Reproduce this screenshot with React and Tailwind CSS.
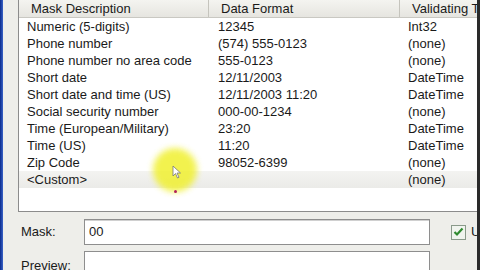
import React from 'react';

const rows = [
  ['Numeric (5-digits)', '12345', 'Int32'],
  ['Phone number', '(574) 555-0123', '(none)'],
  ['Phone number no area code', '555-0123', '(none)'],
  ['Short date', '12/11/2003', 'DateTime'],
  ['Short date and time (US)', '12/11/2003 11:20', 'DateTime'],
  ['Social security number', '000-00-1234', '(none)'],
  ['Time (European/Military)', '23:20', 'DateTime'],
  ['Time (US)', '11:20', 'DateTime'],
  ['Zip Code', '98052-6399', '(none)'],
  ['<Custom>', '', '(none)'],
];

const font = { fontFamily: '"Liberation Sans", Arial, sans-serif' };

export default function App() {
  return (
    <div className="w-[480px] h-[270px] overflow-hidden flex bg-[#eeeeea] text-[13px] text-[#1a1a1a] relative" style={font}>
      {/* window border left */}
      <div className="w-[3px] h-full shrink-0 bg-gradient-to-r from-[#0b2a8c] to-[#3a63c8]" />

      <div className="flex-1 flex flex-col pl-[15px] min-w-0">
        {/* list view */}
        <div className="w-[470px] h-[212px] shrink-0 border-l border-b border-[#8c8c8c] bg-white flex flex-col relative">
          <div className="h-[18px] shrink-0 flex items-center bg-gradient-to-b from-[#f4f4f0] to-[#e6e5e0] border-b border-[#c9c8c2] leading-none">
            <div className="w-[190px] shrink-0 pl-[12px] h-full flex items-center border-r border-[#c5c4bd]">Mask Description</div>
            <div className="w-[191px] shrink-0 pl-[12px] h-full flex items-center border-r border-[#c5c4bd]">Data Format</div>
            <div className="shrink-0 pl-[12px] whitespace-nowrap">Validating Type</div>
          </div>
          {rows.map((r, i) => (
            <div
              key={i}
              className={`h-[17px] shrink-0 flex items-center leading-none whitespace-nowrap ${i === 9 ? 'bg-gradient-to-b from-[#f3f3f1] to-[#ebebe8]' : ''}`}
            >
              <div className="w-[190px] shrink-0 pl-[8px]">{r[0]}</div>
              <div className="w-[191px] shrink-0 pl-[9px]">{r[1]}</div>
              <div className="shrink-0 pl-[8px]">{r[2]}</div>
            </div>
          ))}

          {/* cursor highlight */}
          <div className="absolute left-[134px] top-[148px] w-[44px] h-[44px] rounded-full bg-[#f0f030] opacity-85 blur-[3px]" />
          <svg className="absolute left-[153px] top-[165px]" width="10" height="14" viewBox="0 0 10 14">
            <path d="M1 1 L1 11 L3.5 8.5 L5.5 13 L7 12.3 L5 8 L8.5 8 Z" fill="#fff" stroke="#777" strokeWidth="0.8" />
          </svg>
          <div className="absolute left-[155px] top-[190px] w-[3px] h-[3px] rounded-full bg-[#b0205a]" />
        </div>

        {/* mask row */}
        <div className="flex items-center mt-[7px] h-[26px]">
          <div className="w-[66px] shrink-0 pl-[3px]">Mask:</div>
          <div className="w-[346px] shrink-0 h-[26px] border border-[#8e8e8e] bg-white flex items-center pl-[4px] shadow-[inset_0_1px_0_#d0d0d0]">00</div>
          <div className="ml-[21px] shrink-0 w-[15px] h-[15px] border border-[#8a9a8a] bg-[#f0f4ee] flex items-center justify-center">
            <svg width="11" height="10" viewBox="0 0 11 10">
              <path d="M1.5 5 L4 7.5 L9.5 1.5" fill="none" stroke="#2f8a2f" strokeWidth="2.2" />
            </svg>
          </div>
          <div className="ml-[5px] shrink-0">U</div>
        </div>

        {/* preview row */}
        <div className="flex items-start mt-[6px]">
          <div className="w-[66px] shrink-0 pl-[3px] pt-[5px]">Preview:</div>
          <div className="w-[346px] shrink-0 h-[30px] border border-[#8e8e8e] bg-white" />
        </div>
      </div>

      {/* window border right */}
      <div className="absolute right-0 top-0 w-[3px] h-full bg-[#2a2a2a]" />
    </div>
  );
}
